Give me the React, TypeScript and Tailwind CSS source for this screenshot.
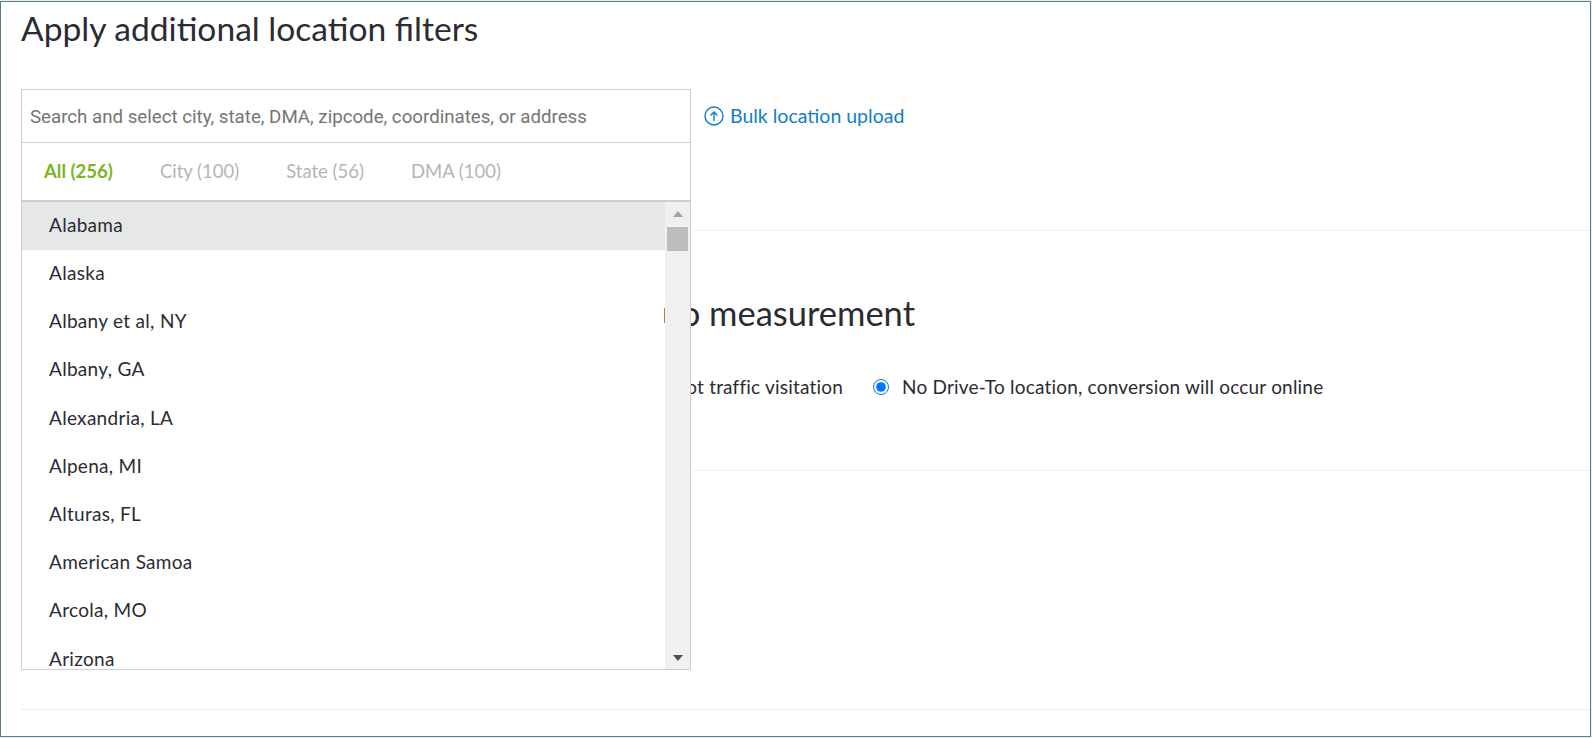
const locations = [
  "Alabama",
  "Alaska",
  "Albany et al, NY",
  "Albany, GA",
  "Alexandria, LA",
  "Alpena, MI",
  "Alturas, FL",
  "American Samoa",
  "Arcola, MO",
  "Arizona",
]

const tabs = [
  { label: "All (256)", active: true },
  { label: "City (100)", active: false },
  { label: "State (56)", active: false },
  { label: "DMA (100)", active: false },
]

const App = () => {
  return (
    <div className="w-[1592px] h-[738px] bg-[#e9eff1] pt-px pr-px overflow-hidden font-['Lato',sans-serif] text-[#2b2b33]">
      <div className="h-[736px] border border-[#5b7a88] bg-white pl-5 flex flex-col">
        {/* Location filters */}
        <div className="h-[229px] shrink-0 border-b border-[#f0f0f0]">
          <h1 className="text-[33.6px] leading-[40px] pt-[6px] h-[87px]">Apply additional location filters</h1>
          <div className="flex items-center h-[54px]">
            <div className="relative w-[670px] h-[54px] z-10">
              <div className="absolute top-0 left-0 w-[670px] h-[581px] bg-white border border-[#cfcfcf] flex flex-col">
                <input
                  className="h-[53px] shrink-0 px-2 pt-[2px] text-[18.7px] font-['Roboto',sans-serif] placeholder:text-[#757575] outline-none border-b border-[#cfcfcf]"
                  placeholder="Search and select city, state, DMA, zipcode, coordinates, or address"
                />
                <div className="h-[59px] shrink-0 flex items-center gap-[47px] pl-[22px] text-[18.5px] border-b-2 border-[#cfcfcf]">
                  {tabs.map((tab) => (
                    <span key={tab.label} className={tab.active ? "font-bold text-[#7ab51d]" : "text-[#b5b5b5]"}>
                      {tab.label}
                    </span>
                  ))}
                </div>
                <div className="flex flex-1 min-h-0">
                  <ul className="relative flex-1 overflow-hidden">
                    {locations.map((name, i) => (
                      <li
                        key={name}
                        className={"h-[48.2px] shrink-0 flex items-center pb-[2px] pl-[27px] text-[19px] tracking-[0.3px] " + (i === 0 ? "bg-[#e6e7e7]" : "")}
                      >
                        {name}
                      </li>
                    ))}
                    {/* last pixel of the heading behind the list */}
                    <span className="absolute right-0 top-[106px] w-px h-[15px] bg-[#c47a2c]" />
                  </ul>
                  <div className="w-[25px] shrink-0 bg-[#f0f0f0] flex flex-col items-center justify-between pt-[9px] pb-2">
                    <div className="flex flex-col items-center w-full">
                      <svg width="10" height="6" viewBox="0 0 10 6"><path d="M5 0l5 6H0z" fill="#a3a3a3" /></svg>
                      <div className="w-[21px] h-6 mt-[10px] bg-[#bdbdbd]" />
                    </div>
                    <svg width="10" height="6" viewBox="0 0 10 6"><path d="M0 0h10L5 6z" fill="#505050" /></svg>
                  </div>
                </div>
              </div>
            </div>
            <a className="ml-[13px] flex items-center gap-[6px] text-[19.5px] text-[#0f7fc4]">
              <svg width="20" height="20" viewBox="0 0 20 20" fill="none" stroke="#0f7fc4" strokeWidth="1.4">
                <circle cx="10" cy="10" r="9" />
                <path d="M10 15V6M6.5 9.5 10 6l3.5 3.5" />
              </svg>
              Bulk location upload
            </a>
          </div>
        </div>

        {/* Drive-To measurement */}
        <div className="h-[240px] shrink-0 border-b border-[#f0f0f0]">
          <h2 className="w-[894px] text-right text-[34.5px] leading-[40px] mt-[62px]">Drive-To measurement</h2>
          <div className="flex items-center h-6 mt-[42px] text-[19px] tracking-[0.2px]">
            <span className="w-[822px] text-right">foot traffic visitation</span>
            <label className="ml-[30px] flex items-center gap-[13px]">
              <input type="radio" name="driveTo" defaultChecked className="w-4 h-4 m-0" />
              No Drive-To location, conversion will occur online
            </label>
          </div>
        </div>

        <div className="h-[239px] shrink-0 border-b border-[#ededed]" />
      </div>
    </div>
  )
}

export default App
